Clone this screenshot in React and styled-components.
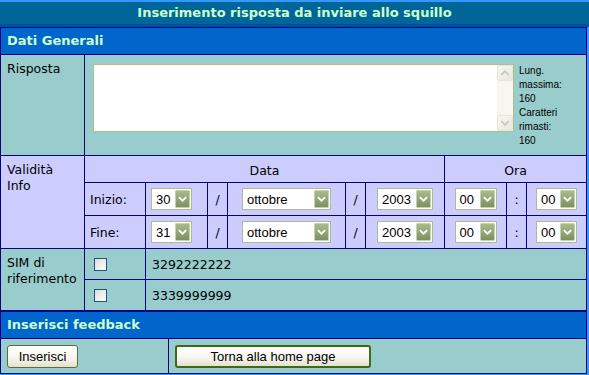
import styled, { createGlobalStyle } from "styled-components";

const GlobalStyle = createGlobalStyle`
  html, body {
    margin: 0;
    padding: 0;
  }
  body {
    background: #3399ff;
    font-family: "DejaVu Sans", Verdana, sans-serif;
    font-size: 12.5px;
    color: #000;
  }
`;

const NAVY = "#000080";
const TEAL = "#99cccc";
const LILAC = "#ccccff";

function Chevron({ color = "#fff", up = false, width = 2 }) {
  return (
    <svg width="15" height="16" viewBox="0 0 15 16">
      <polyline
        points={up ? "4,9.5 7.5,6 11,9.5" : "4,6.5 7.5,10 11,6.5"}
        fill="none"
        stroke={color}
        strokeWidth={width}
        strokeLinecap="square"
      />
    </svg>
  );
}

function FakeSelect({ value, width }) {
  return (
    <SelectBox $w={width}>
      <SelectValue>{value}</SelectValue>
      <SelectArrow>
        <Chevron />
      </SelectArrow>
    </SelectBox>
  );
}

function DateRow({ label, day }) {
  return (
    <>
      <Cell>{label}</Cell>
      <Cell $center $padRight={10}>
        <FakeSelect value={day} width={41} />
      </Cell>
      <Cell $center>/</Cell>
      <Cell $center>
        <FakeSelect value="ottobre" width={89} />
      </Cell>
      <Cell $center>/</Cell>
      <Cell $center>
        <FakeSelect value="2003" width={56} />
      </Cell>
      <Cell $center>
        <FakeSelect value="00" width={42} />
      </Cell>
      <Cell $center>:</Cell>
      <Cell $center>
        <FakeSelect value="00" width={41} />
      </Cell>
    </>
  );
}

export default function App() {
  return (
    <>
      <GlobalStyle />
      <Page>
        <TitleBar>Inserimento risposta da inviare allo squillo</TitleBar>
        <Table>
          <SectionHeader>Dati Generali</SectionHeader>

          <FieldRow $h={100} $bg={TEAL}>
            <Label>Risposta</Label>
            <ReplyCell>
              <TextBox>
                <Area />
                <ScrollBar>
                  <ScrollBtn>
                    <Chevron up color="#c4c4bb" width={1.6} />
                  </ScrollBtn>
                  <ScrollBtn>
                    <Chevron color="#c4c4bb" width={1.6} />
                  </ScrollBtn>
                </ScrollBar>
              </TextBox>
              <Notes>
                Lung.
                <br />
                massima:
                <br />
                160
                <br />
                Caratteri
                <br />
                rimasti:
                <br />
                160
              </Notes>
            </ReplyCell>
          </FieldRow>

          <FieldRow $h={92} $bg={LILAC}>
            <Label>
              Validità
              <br />
              Info
            </Label>
            <DateGrid>
              <HeadCell $span="1 / 7">Data</HeadCell>
              <HeadCell $span="7 / 10">Ora</HeadCell>
              <DateRow label="Inizio:" day="30" />
              <DateRow label="Fine:" day="31" />
            </DateGrid>
          </FieldRow>

          <FieldRow $h={61} $bg={TEAL}>
            <Label>
              SIM di
              <br />
              riferimento
            </Label>
            <SimGrid>
              <CheckCell>
                <Check />
              </CheckCell>
              <Cell>3292222222</Cell>
              <CheckCell>
                <Check />
              </CheckCell>
              <Cell>3339999999</Cell>
            </SimGrid>
          </FieldRow>

          <SectionHeader $gapTop>Inserisci feedback</SectionHeader>

          <ButtonRow>
            <ButtonCell>
              <Button $w={71}>Inserisci</Button>
            </ButtonCell>
            <ButtonCell>
              <Button $w={196} $primary>
                Torna alla home page
              </Button>
            </ButtonCell>
          </ButtonRow>
        </Table>
      </Page>
    </>
  );
}

const Page = styled.div`
  width: 589px;
  padding-top: 2px;
`;

const TitleBar = styled.div`
  height: 22px;
  line-height: 22px;
  background: #006699;
  border-bottom: 3px solid #00529c;
  color: #ccffcc;
  font-weight: bold;
  font-size: 13px;
  text-align: center;
`;

const Table = styled.div`
  width: 587px;
  box-sizing: border-box;
  border: 1px solid ${NAVY};
  background: ${NAVY};
  display: flex;
  flex-direction: column;
  gap: 1px;
`;

const SectionHeader = styled.div`
  height: 26px;
  line-height: 26px;
  padding-left: 6px;
  margin-top: ${(p) => (p.$gapTop ? "1px" : "0")};
  background: #0066cc;
  color: #ccffcc;
  font-weight: bold;
  font-size: 13px;
`;

const FieldRow = styled.div`
  display: grid;
  grid-template-columns: 83px 1fr;
  gap: 1px;
  height: ${(p) => p.$h}px;
  background: ${NAVY};

  & > * {
    background: ${(p) => p.$bg};
  }
`;

const Label = styled.div`
  padding: 6px 0 0 6px;
  line-height: 16px;
`;

const ReplyCell = styled.div`
  display: flex;
  align-items: flex-start;
  padding: 9px 0 0 8px;
`;

const TextBox = styled.div`
  display: flex;
  width: 421px;
  height: 68px;
  box-sizing: border-box;
  border: 1px solid #abbf91;
  background: #fff;
`;

const Area = styled.textarea`
  flex: 1;
  border: none;
  outline: none;
  resize: none;
  overflow: hidden;
  margin: 0;
  padding: 0;
  background: #fff;
`;

const ScrollBar = styled.div`
  width: 16px;
  display: flex;
  flex-direction: column;
  justify-content: space-between;
  background: #f7f6f1;
`;

const ScrollBtn = styled.div`
  width: 16px;
  height: 16px;
  box-sizing: border-box;
  border: 1px solid #e6e5dc;
  border-radius: 2px;
  background: linear-gradient(135deg, #f6f5f0, #e9e8df);
  display: flex;
  align-items: center;
  justify-content: center;
`;

const Notes = styled.div`
  margin-left: 5px;
  font-family: "Liberation Sans", Arial, sans-serif;
  font-size: 10px;
  line-height: 14px;
  white-space: nowrap;
`;

const DateGrid = styled.div`
  display: grid;
  grid-template-columns: 60px 61px 19px 117px 19px 78px 61px 19px 59px;
  grid-template-rows: 26px 32px 32px;
  gap: 1px;
  background: ${NAVY} !important;

  & > * {
    background: ${LILAC};
  }
`;

const Cell = styled.div`
  display: flex;
  align-items: center;
  justify-content: ${(p) => (p.$center ? "center" : "flex-start")};
  padding-left: ${(p) => (p.$center ? 0 : 5)}px;
  padding-right: ${(p) => p.$padRight || 0}px;
`;

const HeadCell = styled.div`
  grid-column: ${(p) => p.$span};
  display: flex;
  align-items: center;
  justify-content: center;
  padding-top: 2px;
`;

const SelectBox = styled.div`
  display: flex;
  align-items: center;
  box-sizing: border-box;
  width: ${(p) => p.$w}px;
  height: 22px;
  padding: 1px;
  border: 1px solid #a9bd8f;
  background: #fff;
  font-family: "Liberation Sans", Arial, sans-serif;
  font-size: 13px;
`;

const SelectValue = styled.span`
  flex: 1;
  padding-left: 3px;
  white-space: nowrap;
  overflow: hidden;
`;

const SelectArrow = styled.span`
  width: 15px;
  height: 18px;
  box-sizing: border-box;
  border: 1px solid #c3d1ad;
  border-radius: 1px;
  background: linear-gradient(#a9ba8e, #8fa372 60%, #7c915f);
  display: flex;
  align-items: center;
  justify-content: center;
`;

const SimGrid = styled.div`
  display: grid;
  grid-template-columns: 60px 1fr;
  grid-template-rows: 30px 30px;
  gap: 1px;
  background: ${NAVY} !important;

  & > * {
    background: ${TEAL};
  }

  & > ${Cell} {
    padding-left: 6px;
  }
`;

const CheckCell = styled.div`
  display: flex;
  align-items: center;
  padding-left: 9px;
`;

const Check = styled.span`
  width: 13px;
  height: 13px;
  box-sizing: border-box;
  border: 1px solid #1c5180;
  background: linear-gradient(135deg, #dcdcd7, #ffffff);
`;

const ButtonRow = styled.div`
  display: grid;
  grid-template-columns: 167px 1fr;
  gap: 1px;
  height: 34px;
  background: ${NAVY};
`;

const ButtonCell = styled.div`
  display: flex;
  align-items: center;
  padding-left: 6px;
  background: ${TEAL};
`;

const Button = styled.button`
  width: ${(p) => p.$w}px;
  height: 23px;
  margin: 0;
  padding: 0;
  box-sizing: border-box;
  border: ${(p) => (p.$primary ? "2px solid #3b6b16" : "1px solid #55703a")};
  border-radius: 3px;
  background: linear-gradient(#fffffd, #f7f6ee 55%, #e4e1d0);
  font-family: "Liberation Sans", Arial, sans-serif;
  font-size: 13px;
  color: #000;
`;
